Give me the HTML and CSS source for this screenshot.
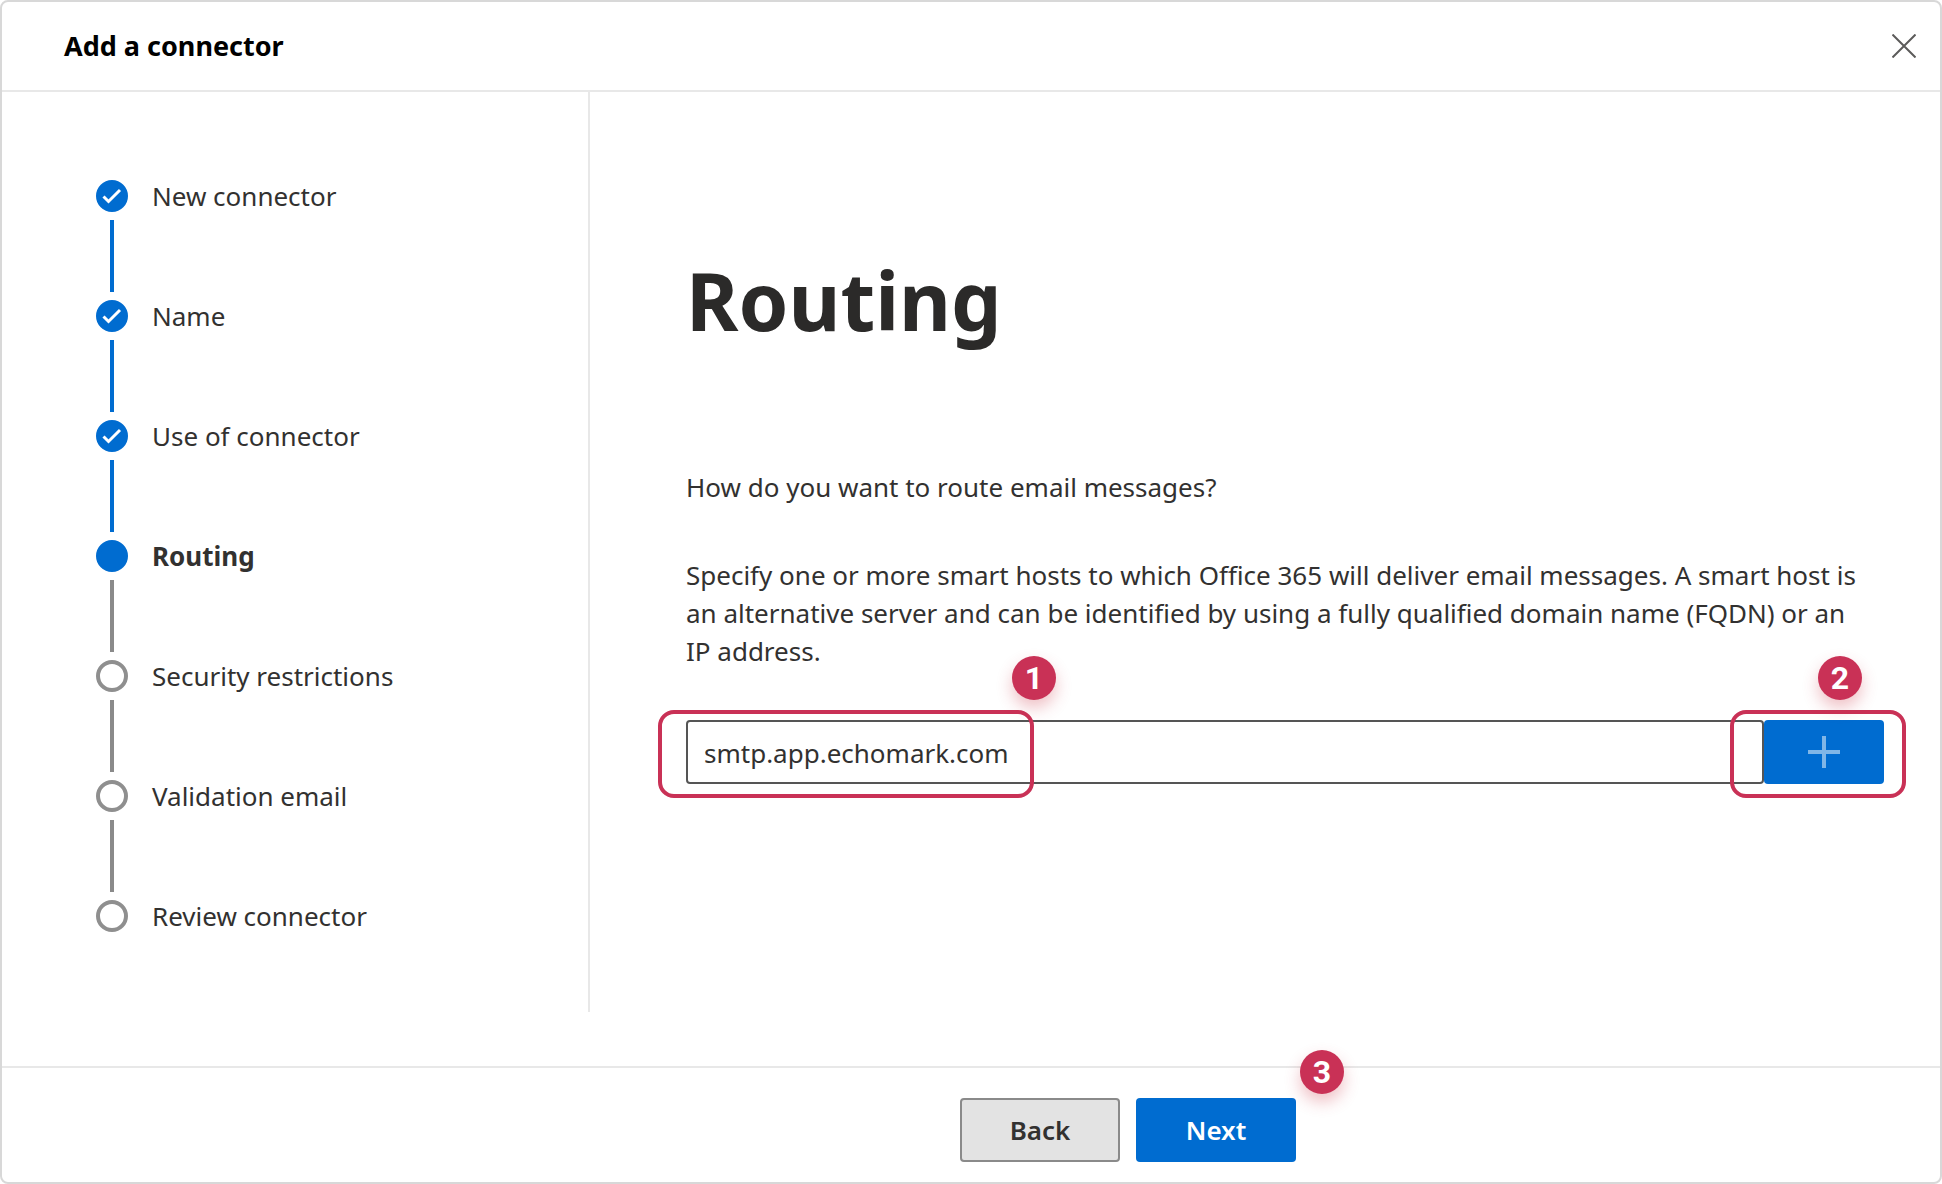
FILE: index.html
```html
<!DOCTYPE html>
<html lang="en">
<head>
<meta charset="utf-8">
<meta name="viewport" content="width=device-width, initial-scale=1">
<title>Add a connector</title>
<link rel="stylesheet" href="styles.css">
</head>
<body>
<div class="panel">
  <header class="panel-header">
    <h2 class="panel-title">Add a connector</h2>
    <button class="close" type="button" aria-label="Close">
      <svg width="24" height="24" viewBox="0 0 24 24" fill="none" stroke="currentColor" stroke-width="2"><path d="M0.5 0.5 23.5 23.5M23.5 0.5 0.5 23.5"/></svg>
    </button>
  </header>

  <div class="panel-body">
    <nav class="sidebar" aria-label="Progress">
      <ol class="steps">
        <li class="step done"><span class="marker"><svg width="20" height="20" viewBox="0 0 20 20" fill="none" stroke="#fff" stroke-width="3"><path d="M1.5 10.5 6.5 15.5 18 4"/></svg></span><span class="step-label">New connector</span></li>
        <li class="step done"><span class="marker"><svg width="20" height="20" viewBox="0 0 20 20" fill="none" stroke="#fff" stroke-width="3"><path d="M1.5 10.5 6.5 15.5 18 4"/></svg></span><span class="step-label">Name</span></li>
        <li class="step done"><span class="marker"><svg width="20" height="20" viewBox="0 0 20 20" fill="none" stroke="#fff" stroke-width="3"><path d="M1.5 10.5 6.5 15.5 18 4"/></svg></span><span class="step-label">Use of connector</span></li>
        <li class="step current" aria-current="step"><span class="marker"></span><span class="step-label">Routing</span></li>
        <li class="step"><span class="marker"></span><span class="step-label">Security restrictions</span></li>
        <li class="step"><span class="marker"></span><span class="step-label">Validation email</span></li>
        <li class="step"><span class="marker"></span><span class="step-label">Review connector</span></li>
      </ol>
    </nav>

    <main class="content">
      <h1 class="heading">Routing</h1>
      <p class="question">How do you want to route email messages?</p>
      <p class="description"><label for="smart-host">Specify one or more smart hosts to which Office 365 will deliver email messages. A smart host is an alternative server and can be identified by using a fully qualified domain name (FQDN) or an IP address.</label></p>
      <div class="host-row">
        <input class="host-input" id="smart-host" type="text" value="smtp.app.echomark.com">
        <button class="add" type="button" aria-label="Add smart host">
          <svg width="32" height="32" viewBox="0 0 32 32" fill="none" stroke="#80b6e7" stroke-width="4"><path d="M0 16H32M16 0V32"/></svg>
        </button>
        <span class="outline outline-input"></span>
        <span class="outline outline-add"></span>
        <span class="badge badge-input">1</span>
        <span class="badge badge-add">2</span>
      </div>
    </main>
  </div>

  <footer class="panel-footer">
    <button class="btn btn-back" type="button">Back</button>
    <div class="next-wrap">
      <button class="btn btn-next" type="button">Next</button>
      <span class="badge badge-next">3</span>
    </div>
  </footer>
</div>
</body>
</html>
```

FILE: styles.css
```css
:root {
  --blue: #006cd0;
  --red: #c93156;
  --text: #323130;
  --line: #e8e8e8;
}

* { box-sizing: border-box; }

body {
  margin: 0;
  background: #fff;
  color: var(--text);
  font: 26px/38px "Noto Sans", "Open Sans", sans-serif;
}

button, input { font: inherit; color: inherit; }

.panel {
  display: flex;
  flex-direction: column;
  min-height: 100vh;
  border: 2px solid #d8d8d8;
  border-radius: 8px;
}

.panel-header {
  display: flex;
  align-items: center;
  justify-content: space-between;
  height: 90px;
  padding: 0 24px 0 62px;
  border-bottom: 2px solid var(--line);
}

.panel-title {
  margin: 0;
  color: #000;
  font-size: 27px;
  font-weight: 700;
}

.close {
  display: flex;
  padding: 0;
  border: 0;
  background: none;
  color: #5c5b5a;
}

.panel-body {
  display: flex;
  flex: 1;
}

.sidebar {
  flex: none;
  width: 588px;
  margin-bottom: 54px;
  padding: 88px 0 0 94px;
  border-right: 2px solid var(--line);
}

.steps {
  display: grid;
  gap: 8px;
  margin: 0;
  padding: 0;
  list-style: none;
}

.step {
  display: grid;
  grid-template-columns: 32px 1fr;
  grid-template-rows: 32px 72px;
  column-gap: 24px;
  row-gap: 8px;
  align-items: center;
}

.step:last-child { grid-template-rows: 32px; }

.step:not(:last-child)::after {
  content: "";
  justify-self: center;
  width: 4px;
  height: 72px;
  background: #8a8a8a;
}

.step.done::after { background: var(--blue); }

.marker {
  display: flex;
  align-items: center;
  justify-content: center;
  width: 32px;
  height: 32px;
  border: 4px solid #8f8f8f;
  border-radius: 50%;
}

.done .marker, .current .marker {
  border-color: var(--blue);
  background: var(--blue);
}

.marker svg { flex: none; }

.current .step-label { font-weight: 700; }

.content {
  flex: 1;
  min-width: 0;
  padding: 152px 56px 0 96px;
}

.heading {
  margin: 0;
  color: #2b2a29;
  font-size: 80px;
  font-weight: 700;
  line-height: 112px;
}

.question { margin: 112px 0 50px; }

.description { margin: 0; padding-right: 24px; }

.host-row {
  position: relative;
  display: flex;
  margin-top: 50px;
}

.host-input {
  flex: 1;
  min-width: 0;
  height: 64px;
  padding: 2px 16px 0;
  border: 2px solid #555;
  border-radius: 4px;
  background: #fff;
}

.add {
  display: flex;
  align-items: center;
  justify-content: center;
  width: 120px;
  height: 64px;
  padding: 0;
  border: 0;
  border-radius: 4px;
  background: var(--blue);
}

.outline {
  position: absolute;
  top: -10px;
  height: 88px;
  border: 4px solid var(--red);
  border-radius: 16px;
  pointer-events: none;
}

.outline-input { left: -28px; width: 376px; }
.outline-add { right: -22px; width: 176px; }

.badge {
  position: absolute;
  display: flex;
  align-items: center;
  justify-content: center;
  width: 44px;
  height: 44px;
  border-radius: 50%;
  background: var(--red);
  box-shadow: 0 8px 16px rgba(201, 49, 66, 0.3);
  color: #fff;
  font: 700 32px/44px Roboto, sans-serif;
}

.badge-input { top: -64px; left: 326px; }
.badge-add { top: -64px; right: 22px; }
.badge-next { top: -48px; right: -48px; }

.panel-footer {
  display: flex;
  justify-content: center;
  gap: 16px;
  padding: 30px 0 20px 314px;
  border-top: 2px solid var(--line);
}

.next-wrap { position: relative; }

.btn {
  width: 160px;
  height: 64px;
  padding: 0;
  border: 0;
  border-radius: 4px;
  font-weight: 600;
}

.btn-back {
  border: 2px solid #8a8a8a;
  background: #e3e3e3;
}

.btn-next {
  background: var(--blue);
  color: #fff;
}
```
